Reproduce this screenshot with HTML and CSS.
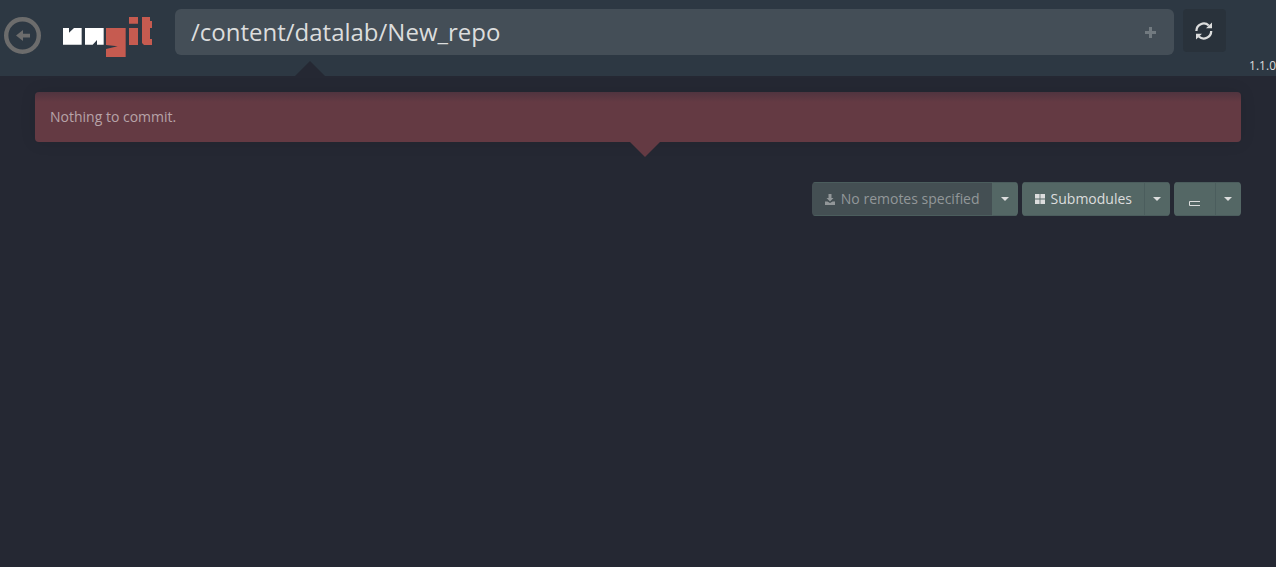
FILE: index.html
```html
<!DOCTYPE html>
<html lang="en">
<head>
<meta charset="utf-8">
<title>ungit</title>
<link rel="stylesheet" href="styles.css">
</head>
<body>
<header class="navbar">
  <button class="back" type="button" aria-label="Back">
    <svg width="37" height="37" viewBox="0 0 37 37"><circle cx="18.5" cy="18.5" r="16.3" fill="none" stroke="#6c6c6c" stroke-width="4.4"/><path d="M12 18.5 19 13v3.7h7v3.8h-7V24z" fill="#6c6c6c"/></svg>
  </button>
  <a class="logo" href="#" aria-label="ungit">
    <svg width="90" height="30" viewBox="39 27 270 90" overflow="visible">
      <path fill="#fff" d="M39 60H57V74L72 60H95V110H39zM105 60H161V110H141V96L128 110H105z"/>
      <path fill="#c65b50" d="M168 60H227V147H168V123L203 115 168 111zM237 27H264V47H237zM237 60H264V111H237zM276 27H300V39H306V60H300V93H306V111H282L276 105z"/>
    </svg>
  </a>
  <form class="path">
    <input class="path-input" type="text" aria-label="Repository path" value="/content/datalab/New_repo">
    <button class="add" type="button" aria-label="Add to favorites">
      <svg width="11" height="11" viewBox="0 0 11 11"><path d="M4 0h3v4h4v3H7v4H4V7H0V4h4z" fill="#727a80"/></svg>
    </button>
  </form>
  <button class="refresh" type="button" aria-label="Refresh">
    <svg width="18" height="18" viewBox="0 0 18 18"><path d="M1.4 9A7.4 7.4 0 0 1 13.8 3.5M16.2 9A7.4 7.4 0 0 1 3.8 14.5" fill="none" stroke="#dcdddd" stroke-width="2.3"/><path d="M17 .5v5.7h-6zM1 17.5v-5.7h6z" fill="#dcdddd"/></svg>
  </button>
  <span class="version">1.1.0</span>
</header>
<main class="content">
  <p class="alert">Nothing to commit.</p>
  <div class="toolbar">
    <div class="group">
      <button class="btn" type="button" disabled>
        <svg width="10" height="11" viewBox="0 0 10 11"><path d="M3.5 0h3v4h2L5 7.5 1.5 4h2zM0 7.5h2.5L5 9l2.5-1.5H10V11H0z" fill="currentColor"/></svg>
        No remotes specified
      </button>
      <button class="btn toggle" type="button" aria-label="Remotes menu"></button>
    </div>
    <div class="group">
      <button class="btn" type="button">
        <svg width="10" height="10" viewBox="0 0 10 10"><path d="M0 0h4.6v4.6H0zM5.4 0H10v4.6H5.4zM0 5.4h4.6V10H0zM5.4 5.4H10V10H5.4z" fill="currentColor"/></svg>
        Submodules
      </button>
      <button class="btn toggle" type="button" aria-label="Submodules menu"></button>
    </div>
    <div class="group">
      <button class="btn terminal" type="button" aria-label="Editor">
        <svg width="11" height="5" viewBox="0 0 11 5"><path d="M11 .5H.5v4H11" fill="none" stroke="currentColor"/></svg>
      </button>
      <button class="btn toggle" type="button" aria-label="Editor menu"></button>
    </div>
  </div>
</main>
</body>
</html>
```
FILE: styles.css
```css
* { box-sizing: border-box; }
body {
  margin: 0;
  background: #252833;
  color: #dcdddd;
  font: 14px/20px "Open Sans", "Noto Sans", sans-serif;
}
button { margin: 0; padding: 0; border: 0; font: inherit; color: inherit; background: none; }
svg { display: block; flex: none; }

.navbar {
  position: relative;
  display: flex;
  align-items: flex-start;
  height: 76px;
  padding: 9px 0 0 4px;
  background: #2d3843;
}
.navbar::after {
  content: "";
  position: absolute;
  left: 295px;
  bottom: 0;
  border: 15px solid transparent;
  border-top: 0;
  border-bottom-color: #252833;
}
.back { margin: 8px 22px 0 0; }
.logo { margin: 8px 22px 0 0; }
.path {
  display: flex;
  align-items: center;
  flex: 1;
  height: 46px;
  padding: 0 18px 0 16px;
  border-radius: 6px;
  background: #444e57;
}
.path-input {
  flex: 1;
  min-width: 0;
  height: 46px;
  padding: 0;
  border: 0;
  outline: 0;
  background: none;
  color: #dcdddd;
  font: 24px/46px "Open Sans", "Noto Sans", sans-serif;
}
.refresh {
  display: grid;
  place-items: center;
  width: 43px;
  height: 43px;
  margin: 0 23px 0 9px;
  padding-right: 2px;
  border-radius: 4px;
  background: #29323b;
}
.version { align-self: flex-end; font-size: 12px; }

.content { padding: 16px 35px 0; }
.alert {
  position: relative;
  margin: 0 0 40px;
  padding: 15px;
  border-radius: 4px;
  background: linear-gradient(#50343f, #643a43 10px);
  box-shadow: 0 0 16px rgba(0, 0, 0, 0.1);
  color: #b7a3a8;
}
.alert::after {
  content: "";
  position: absolute;
  left: calc(50% - 8px);
  top: 100%;
  border: 15px solid transparent;
  border-bottom: 0;
  border-top-color: #643a43;
}
.toolbar { display: flex; justify-content: flex-end; gap: 4px; }
.group { display: flex; border-radius: 4px; overflow: hidden; }
.btn {
  display: flex;
  align-items: center;
  justify-content: center;
  gap: 6px;
  height: 34px;
  padding: 0 12px 0 13px;
  background: #546765;
  border: solid #4b5d5d;
  border-width: 1px 0;
}
.btn:disabled { background: #444f53; color: #929799; }
.toggle { width: 26px; padding: 0 1px 0 0; border-left-width: 1px; }
.btn:disabled + .toggle { border-left-color: #546765; }
.toggle::after {
  content: "";
  border: 4px solid transparent;
  border-bottom: 0;
  border-top-color: #dcdddd;
}
.terminal { width: 41px; padding: 8px 0 0; }
```
